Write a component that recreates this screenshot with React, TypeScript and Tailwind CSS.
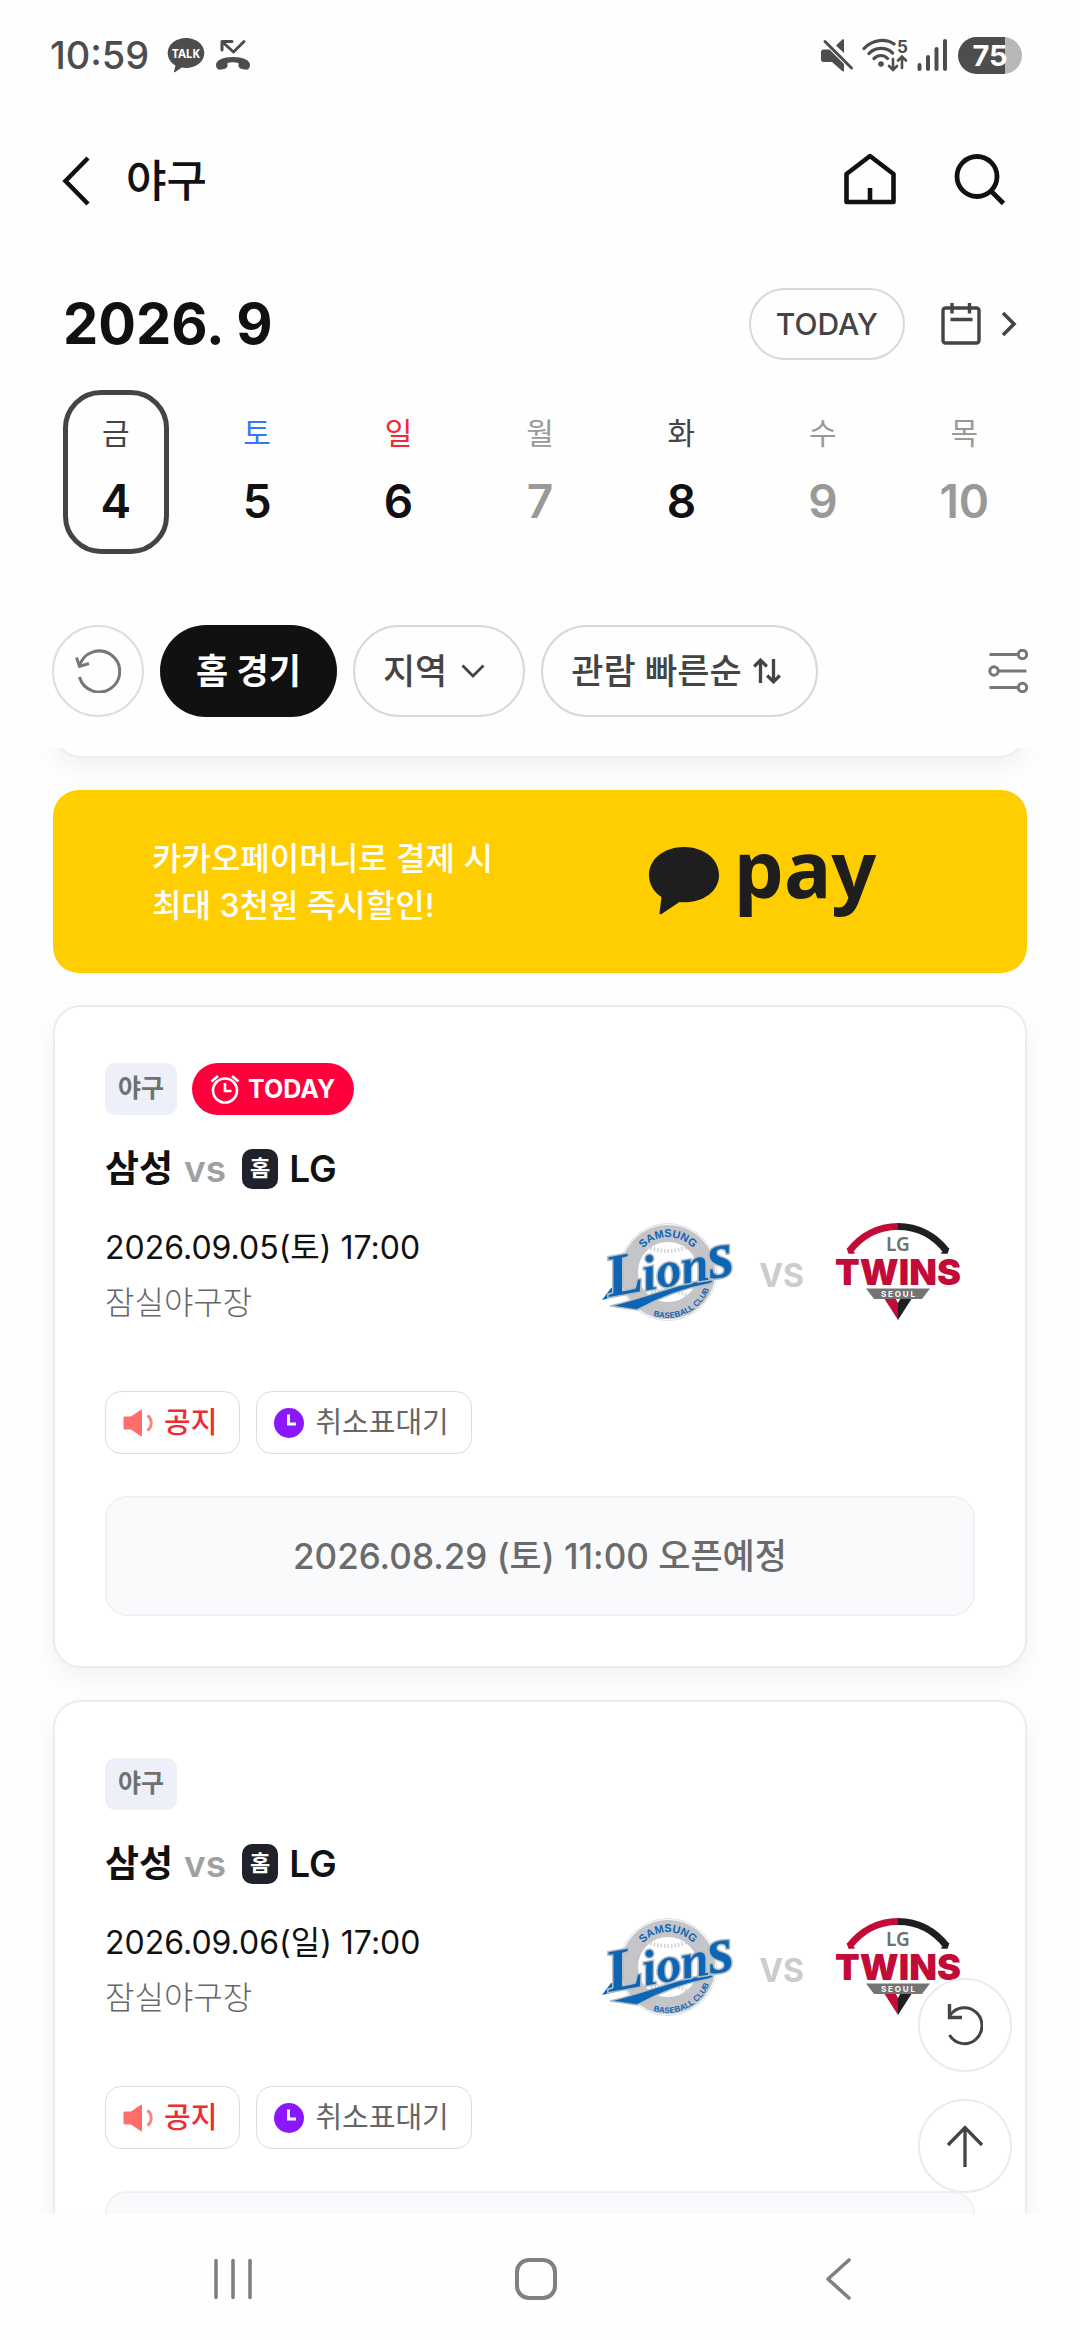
import { useState } from "react";

const FONT = "font-['Inter','Noto_Sans_CJK_KR',sans-serif]";

type Day = { label: string; date: number; labelColor: string; dateColor: string };

const DAYS: Day[] = [
  { label: "금", date: 4, labelColor: "text-[#444]", dateColor: "text-[#111]" },
  { label: "토", date: 5, labelColor: "text-[#3478f6]", dateColor: "text-[#111]" },
  { label: "일", date: 6, labelColor: "text-[#f02935]", dateColor: "text-[#111]" },
  { label: "월", date: 7, labelColor: "text-[#999]", dateColor: "text-[#999]" },
  { label: "화", date: 8, labelColor: "text-[#444]", dateColor: "text-[#111]" },
  { label: "수", date: 9, labelColor: "text-[#999]", dateColor: "text-[#999]" },
  { label: "목", date: 10, labelColor: "text-[#999]", dateColor: "text-[#999]" },
];

const GAMES = [
  { id: 1, when: "2026.09.05(토) 17:00", today: true, open: "2026.08.29 (토) 11:00 오픈예정" },
  { id: 2, when: "2026.09.06(일) 17:00", today: false, open: "2026.08.30 (일) 11:00 오픈예정" },
];

function StatusBar() {
  return (
    <div className="flex h-[110px] shrink-0 items-center justify-between pr-[58px] pl-[50px] text-[#4d4d4d]">
      <div className="flex items-center">
        <span className="text-[38px] leading-none font-medium">10:59</span>
        <svg className="ml-[18px] h-[36px] w-[38px]" viewBox="0 0 38 36" fill="currentColor" aria-label="카카오톡">
          <path d="M19 1C8.800 1 .7 7.600.7 16c0 5.400 3.100 9.900 7.800 12.600L7 34.200c-.2.9.5 1.300 1.200.8l6.600-4.400c1.400.3 2.800.4 4.200.4 10.200 0 18.300-6.600 18.300-15S29.200 1 19 1z" />
          <text x="19" y="20.500" fontSize="11.500" fontWeight="700" fontFamily="Noto Sans" fill="#fff" textAnchor="middle">TALK</text>
        </svg>
        <svg className="ml-[10px] h-[32px] w-[36px]" viewBox="0 0 36 32" aria-label="부재중 전화">
          <path d="M7 11V2.500h10M7.500 3L18.500 13L29 2.500" fill="none" stroke="currentColor" strokeWidth="3" strokeLinecap="round" strokeLinejoin="round" />
          <path d="M1 26c0-5 7-8 17-8s17 3 17 8c0 3.600-2 5-5 4.600-4.500-.5-6.500-1.500-6.500-4V24c-3-.9-8-.9-11 0v2.600c0 2.500-2 3.500-6.500 4C3 31 1 29.600 1 26z" fill="currentColor" />
        </svg>
      </div>
      <div className="flex items-center">
        <svg className="h-[34px] w-[34px]" viewBox="0 0 34 34" fill="currentColor" aria-label="무음">
          <path d="M3.500 11.500h6L24 26v6.500c0 1-1 1.200-1.800.5L12 24H3.500C2 24 1 23 1 21.500V14c0-1.500 1-2.500 2.500-2.500z" />
          <path d="M16 7.500L22 1.800c.8-.8 2-.4 2 .6V15z" />
          <path d="M5 3.500L31.500 30" stroke="currentColor" strokeWidth="3" strokeLinecap="round" />
        </svg>
        <svg className="ml-2 h-[34px] w-[46px]" viewBox="0 0 46 34" fill="none" stroke="currentColor" strokeWidth="3.200" strokeLinecap="round" aria-label="와이파이">
          <path d="M2 10.500C11 1 24 .5 32 6M7 15.500c6-6.500 17-7 23.500-.5M12 20.500c4-4 10-4 13.500 0" />
          <circle cx="19" cy="26" r="2.800" fill="currentColor" stroke="none" />
          <path d="M31 21v10.500M27 28l4 4 4-4M40 30V19M36 22.500l4-4 4 4" strokeWidth="2.600" />
          <text x="40.500" y="14.500" fontSize="17" fontWeight="700" fill="currentColor" stroke="none" textAnchor="middle">5</text>
        </svg>
        <svg className="ml-2 h-[34px] w-[32px]" viewBox="0 0 32 34" stroke="currentColor" strokeWidth="4" strokeLinecap="round" aria-label="신호 세기">
          <path d="M3.500 27v4M12 19v12M20.500 11v20M29 3v28" />
        </svg>
        <div className="ml-[10px] flex h-[37px] w-[64px] items-center justify-center rounded-full bg-[linear-gradient(90deg,#4d4d4d_74%,#b8b8b8_74%)] text-[29px] leading-none font-bold text-white">
          75
        </div>
      </div>
    </div>
  );
}

function Header() {
  return (
    <header className="flex h-[142px] shrink-0 items-center justify-between pr-[66px] pl-[52px] text-[#111]">
      <div className="flex items-center">
        <button aria-label="뒤로" className="flex h-14 w-12 items-center justify-center">
          <svg className="h-[50px] w-[28px]" viewBox="0 0 28 50" fill="none" stroke="currentColor" strokeWidth="4.500">
            <path d="M26 2L3.500 25L26 48" />
          </svg>
        </button>
        <h1 className="ml-[26px] text-[44px] leading-[60px] font-medium">야구</h1>
      </div>
      <div className="flex items-center gap-[54px] pb-1">
        <button aria-label="홈" className="flex h-15 w-15 items-center justify-center">
          <svg className="h-[52px] w-[52px]" viewBox="0 0 52 52" fill="none" stroke="currentColor" strokeWidth="4.600" strokeLinejoin="round">
            <path d="M2.500 21L26 3L49.500 21V49H2.500z" />
            <path d="M26 35v14" />
          </svg>
        </button>
        <button aria-label="검색" className="flex h-15 w-15 items-center justify-start">
          <svg className="h-[52px] w-[52px]" viewBox="0 0 52 52" fill="none" stroke="currentColor" strokeWidth="4.800">
            <circle cx="23" cy="23.500" r="20" />
            <path d="M37 38L49.500 50.500" />
          </svg>
        </button>
      </div>
    </header>
  );
}

function MonthRow() {
  return (
    <div className="mt-9 flex h-[72px] items-center justify-between px-[63px]">
      <h2 className="text-[56px] leading-[72px] font-bold text-[#111]">2026. 9</h2>
      <div className="flex items-center">
        <button className="h-[72px] rounded-full border-2 border-[#d8d8d8] px-[25px] text-[30px] leading-none font-medium text-[#444]">
          TODAY
        </button>
        <button aria-label="달력 열기" className="ml-9 flex items-center gap-5 text-[#444]">
          <svg className="h-[42px] w-[40px]" viewBox="0 0 40 42" fill="none" stroke="currentColor" strokeWidth="3.400">
            <rect x="2" y="5" width="36" height="35" rx="2.500" />
            <path d="M11 0v10.500M28.500 0v10.500M9.500 16.500h22" />
          </svg>
          <svg className="h-[26px] w-[16px]" viewBox="0 0 16 26" fill="none" stroke="currentColor" strokeWidth="3.600">
            <path d="M2 2L13 13L2 24" />
          </svg>
        </button>
      </div>
    </div>
  );
}

function WeekStrip() {
  const [selected, setSelected] = useState(4);
  return (
    <div className="mt-[30px] grid grid-cols-7 justify-items-center px-[45px]">
      {DAYS.map((d) => (
        <button
          key={d.date}
          aria-pressed={selected === d.date}
          onClick={() => setSelected(d.date)}
          className={`flex h-[164px] w-[106px] flex-col items-center justify-center gap-5 rounded-[38px] border-[5px] pb-[3px] ${
            selected === d.date ? "border-[#444]" : "border-transparent"
          }`}
        >
          <span className={`text-[30px] leading-[40px] ${d.labelColor}`}>{d.label}</span>
          <span className={`text-[46px] leading-[56px] font-semibold ${d.dateColor}`}>{d.date}</span>
        </button>
      ))}
    </div>
  );
}

function Filters() {
  return (
    <div className="mt-[71px] mb-[31px] flex items-center gap-4 px-[52px]">
      <button aria-label="필터 초기화" className="flex h-[92px] w-[92px] items-center justify-center rounded-full border-2 border-[#dedede] text-[#777]">
        <svg className="h-[44px] w-[46px]" viewBox="0 0 46 44" fill="none" stroke="currentColor" strokeWidth="3">
          <path d="M4.500 17A20.500 20.500 0 1 1 4.500 28" />
          <path d="M1.500 8.500L4.500 17.500L14 14.500" />
        </svg>
      </button>
      <button aria-pressed="true" className="h-[92px] rounded-full bg-[#111] px-[36px] text-[35px] leading-none font-bold text-white">
        홈 경기
      </button>
      <label className="relative flex h-[92px] items-center rounded-full border-2 border-[#d8d8d8] text-[#444]">
        <select aria-label="지역" className="field-sizing-content h-full appearance-none rounded-full bg-transparent pr-[76px] pl-[28px] text-[35px] font-medium outline-none">
          <option>지역</option>
        </select>
        <svg className="pointer-events-none absolute right-[38px] h-[14px] w-[24px]" viewBox="0 0 24 14" fill="none" stroke="currentColor" strokeWidth="2.800">
          <path d="M1.500 1.500L12 12L22.500 1.500" />
        </svg>
      </label>
      <button className="flex h-[92px] items-center gap-[11px] rounded-full border-2 border-[#d8d8d8] pr-[35px] pl-[28px] text-[35px] leading-none font-medium text-[#444]">
        관람 빠른순
        <svg className="h-[26px] w-[28px]" viewBox="0 0 28 26" fill="none" stroke="currentColor" strokeWidth="3.300">
          <path d="M7.500 25V2M1.200 8.500L7.500 2.200L13.800 8.500M20.500 1v23M14.200 17.500L20.500 23.800L26.800 17.500" />
        </svg>
      </button>
      <button aria-label="상세 필터" className="ml-auto text-[#777]">
        <svg className="h-[44px] w-[40px]" viewBox="0 0 40 44" fill="none" stroke="currentColor" strokeWidth="3">
          <path d="M1.500 5.500H30M10.500 22H38.500M1.500 38.500H30" />
          <circle cx="34.500" cy="5.500" r="4.200" />
          <circle cx="6" cy="22" r="4.200" />
          <circle cx="34.500" cy="38.500" r="4.200" />
        </svg>
      </button>
    </div>
  );
}

function PayBanner() {
  return (
    <a href="#kakaopay" className="flex h-[183px] items-center justify-between rounded-[26px] bg-[#ffce00] pr-[140px] pl-[99px]">
      <p className="text-[32px] leading-[47px] font-medium text-white">
        카카오페이머니로 결제 시<br />
        최대 3천원 즉시할인!
      </p>
      <svg className="h-[160px] w-[240px]" viewBox="0 -40 240 160" fill="#1e1e1e" aria-label="카카오페이">
        <path d="M37 5C17 5 2 17 2 33c0 9 4.600 17 12.500 22L12.500 71c-.1 1.300 1 1.700 2 1l18-12c1.500.2 3 .3 4.500.3C57 60.300 72 49 72 33S57 5 37 5z" />
        <text x="87" y="56" fontFamily="Noto Sans" fontWeight="700" fontSize="79">pay</text>
      </svg>
    </a>
  );
}

function LionsLogo() {
  return (
    <svg className="h-[100px] w-[140px]" viewBox="0 0 140 100" aria-label="삼성 라이온즈">
      <defs>
        <path id="lions-top" d="M34 41A34 34 0 0 1 100 41" />
        <path id="lions-bottom" d="M47 92A46 46 0 0 0 110 62" />
      </defs>
      <circle cx="67" cy="50" r="48.500" fill="#fff" stroke="#dcdddf" strokeWidth="1" />
      <circle cx="67" cy="50" r="38.500" fill="#fff" stroke="#c3c5c8" strokeWidth="17" />
      <path d="M46 25q20 8 40 0M50 71q20-7 38 4" fill="none" stroke="#cfd0d2" strokeWidth="4" strokeDasharray="1.500 2" />
      <text fill="#1064b4" fontSize="11" fontWeight="700" fontFamily="Liberation Sans">
        <textPath href="#lions-top" startOffset="50%" textAnchor="middle">SAMSUNG</textPath>
      </text>
      <text fill="#1064b4" fontSize="8" fontWeight="700" fontFamily="Liberation Sans">
        <textPath href="#lions-bottom" startOffset="50%" textAnchor="middle">BASEBALL CLUB</textPath>
      </text>
      <path d="M1 78L10 66L22 68L18 74z" fill="#0d66b5" />
      <path d="M9 84C50 74 78 61 104 58c8-1 12 1 4 4C84 66 58 76 36 88z" fill="#0d66b5" stroke="#b7bcc2" strokeWidth="1.500" />
      <text x="8" y="75" transform="rotate(-10 8 75)" fill="#0d66b5" stroke="#b7bcc2" strokeWidth="3" paintOrder="stroke" fontFamily="Liberation Serif" fontStyle="italic" fontWeight="700" fontSize="50">
        <tspan fontSize="60">L</tspan>ion<tspan fontSize="66">s</tspan>
      </text>
    </svg>
  );
}

function TwinsLogo() {
  return (
    <svg className="h-[100px] w-[132px]" viewBox="-4 0 132 100" aria-label="LG 트윈스">
      <path d="M62 4.500C42 4.500 25 14 13.500 29" fill="none" stroke="#c30b37" strokeWidth="7" />
      <path d="M62 4.500C82 4.500 99 14 110.500 29" fill="none" stroke="#1f1f1f" strokeWidth="7" />
      <path d="M10.500 26l9 5-2 .8h-5z" fill="#c30b37" />
      <path d="M113.500 26l-9 5 2 .8h5z" fill="#1f1f1f" />
      <text x="62" y="29" fontFamily="Noto Sans" fontSize="19" fontWeight="600" fill="#707070" textAnchor="middle">LG</text>
      <path d="M46 73L62 98V81L57.500 73z" fill="#c30b37" />
      <path d="M78 73L62 98V81L66.500 73z" fill="#1f1f1f" />
      <path d="M30 66.500H94L86 77H38z" fill="#747474" />
      <text x="62" y="62.500" fontSize="36" fontWeight="900" fill="#c30b37" textAnchor="middle">TWINS</text>
      <text x="62" y="74.500" fontSize="8" fontWeight="700" fill="#fff" textAnchor="middle">S E O U L</text>
    </svg>
  );
}

function GameCard({ game }: { game: (typeof GAMES)[number] }) {
  return (
    <article className="rounded-[28px] border-2 border-[#ececec] bg-white px-[50px] pt-[56px] pb-[50px] shadow-[0_10px_24px_rgba(0,0,0,0.05)]">
      <div className="flex items-center gap-[15px]">
        <span className="flex h-[52px] items-center rounded-[10px] bg-[#edf0f8] px-[13px] pb-[2px] text-[25px] leading-none font-bold text-[#707070]">야구</span>
        {game.today && (
          <span className="flex h-[52px] items-center gap-2 rounded-full bg-[#ff003d] pr-[19px] pl-[18px] text-[25px] leading-none font-bold text-white">
            <svg className="h-[30px] w-[30px]" viewBox="0 0 30 30" fill="none" stroke="currentColor" strokeWidth="2.600">
              <circle cx="15" cy="16.500" r="12" />
              <path d="M15 9v8h6.500M1.500 7.500L8 2M28.500 7.500L22 2" />
            </svg>
            TODAY
          </span>
        )}
      </div>
      <h3 className="mt-6 flex h-[60px] items-center text-[37px] leading-[60px] font-semibold text-[#111]">
        <span>삼성</span>
        <span className="ml-[11px] text-[#a0a0a0]">vs</span>
        <span className="mr-[11px] ml-4 flex h-[40px] w-[36px] items-center justify-center rounded-[10px] bg-[#1f222b] pb-[2px] text-[22px] leading-none font-bold text-white">홈</span>
        <span>LG</span>
      </h3>
      <div className="mt-5 flex h-[136px] justify-between">
        <div>
          <p className="mt-1 text-[32px] leading-[50px] text-[#111]">{game.when}</p>
          <p className="mt-[5px] text-[32px] leading-[50px] font-light text-[#666]">잠실야구장</p>
        </div>
        <div className="mr-[11px] flex h-[106px] items-center">
          <LionsLogo />
          <span className="mt-2 mr-7 ml-[18px] text-[32px] leading-none font-bold text-[#ccc]">VS</span>
          <TwinsLogo />
        </div>
      </div>
      <div className="mt-[36px] flex gap-4">
        <button className="flex h-[63px] items-center rounded-2xl border border-[#dcdcdc] pr-[22px] pl-[17px] text-[29px] leading-none font-medium text-[#ef2b33]">
          <svg className="mr-[11px] h-[30px] w-[30px]" viewBox="0 0 30 30" fill="#ff6d6d">
            <path d="M2 8.500h6L17.500 2c.8-.5 1.500-.2 1.500.8v24.400c0 1-.7 1.300-1.500.8L8 21.500H2c-1 0-1.500-.5-1.500-1.500V10c0-1 .5-1.500 1.500-1.500z" />
            <path d="M24.500 7.500c5 4 5 11 0 15" fill="none" stroke="#ff8080" strokeWidth="3" />
          </svg>
          공지
        </button>
        <button className="flex h-[63px] items-center rounded-2xl border border-[#dcdcdc] pr-[22px] pl-[17px] text-[29px] leading-none text-[#666]">
          <svg className="mr-[11px] h-[30px] w-[30px]" viewBox="0 0 30 30">
            <circle cx="15" cy="15" r="15" fill="#8b17ff" />
            <path d="M14.500 6.500v9.500H22" fill="none" stroke="#fff" strokeWidth="3" />
          </svg>
          취소표대기
        </button>
      </div>
      <button disabled className="mt-[42px] h-[120px] w-full rounded-[22px] border-2 border-[#eff1f4] bg-[#f8fafc] text-[35px] leading-none font-medium text-[#6b6b6b]">
        {game.open}
      </button>
    </article>
  );
}

function FloatingButtons() {
  const base = "flex h-[94px] w-[94px] items-center justify-center rounded-full border-2 border-[#ebebeb] bg-white text-[#444]";
  return (
    <div className="absolute right-[68px] bottom-[21px] flex flex-col gap-[27px]">
      <button aria-label="새로고침" className={base}>
        <svg className="h-[42px] w-[36px]" viewBox="0 0 36 42" fill="none" stroke="currentColor" strokeWidth="3">
          <path d="M3 11.500A17.500 18 0 1 1 2.500 31" />
          <path d="M2.500 0v13.500H15" strokeWidth="3.400" />
        </svg>
      </button>
      <button aria-label="맨 위로" className={base}>
        <svg className="h-[42px] w-[38px]" viewBox="0 0 38 42" fill="none" stroke="currentColor" strokeWidth="3.300">
          <path d="M19 42V2M2 20L19 2.500L36 20" />
        </svg>
      </button>
    </div>
  );
}

function SystemNav() {
  return (
    <nav className="flex h-[126px] shrink-0 items-center justify-between pt-1 pr-[212px] pl-[203px] text-[#808080]">
      <button aria-label="최근 앱" className="flex h-14 w-15 items-center justify-center">
        <svg className="h-[42px] w-[40px]" viewBox="0 0 40 42" stroke="currentColor" strokeWidth="3.600" strokeLinecap="round">
          <path d="M3 2.500v37M20 2.500v37M37 2.500v37" />
        </svg>
      </button>
      <button aria-label="홈 화면" className="flex h-14 w-15 items-center justify-center">
        <svg className="h-[42px] w-[42px]" viewBox="0 0 42 42" fill="none" stroke="currentColor" strokeWidth="4">
          <rect x="2" y="2" width="38" height="38" rx="12" />
        </svg>
      </button>
      <button aria-label="이전" className="flex h-14 w-15 items-center justify-center">
        <svg className="h-[42px] w-[26px]" viewBox="0 0 26 42" fill="none" stroke="currentColor" strokeWidth="3.600" strokeLinecap="round" strokeLinejoin="round">
          <path d="M24 2L3 21L24 40" />
        </svg>
      </button>
    </nav>
  );
}

export default function App() {
  return (
    <div className={`flex h-screen flex-col bg-[#fefefe] ${FONT}`}>
      <StatusBar />
      <Header />
      <MonthRow />
      <WeekStrip />
      <Filters />
      <main className="relative min-h-0 flex-1 overflow-hidden">
        <div className="flex flex-col gap-8 px-[53px]">
          <div className="-mt-[54px] h-16 rounded-[28px] border-2 border-[#ececec] bg-white shadow-[0_10px_24px_rgba(0,0,0,0.05)]" />
          <PayBanner />
          {GAMES.map((g) => (
            <GameCard key={g.id} game={g} />
          ))}
        </div>
        <FloatingButtons />
      </main>
      <SystemNav />
    </div>
  );
}
